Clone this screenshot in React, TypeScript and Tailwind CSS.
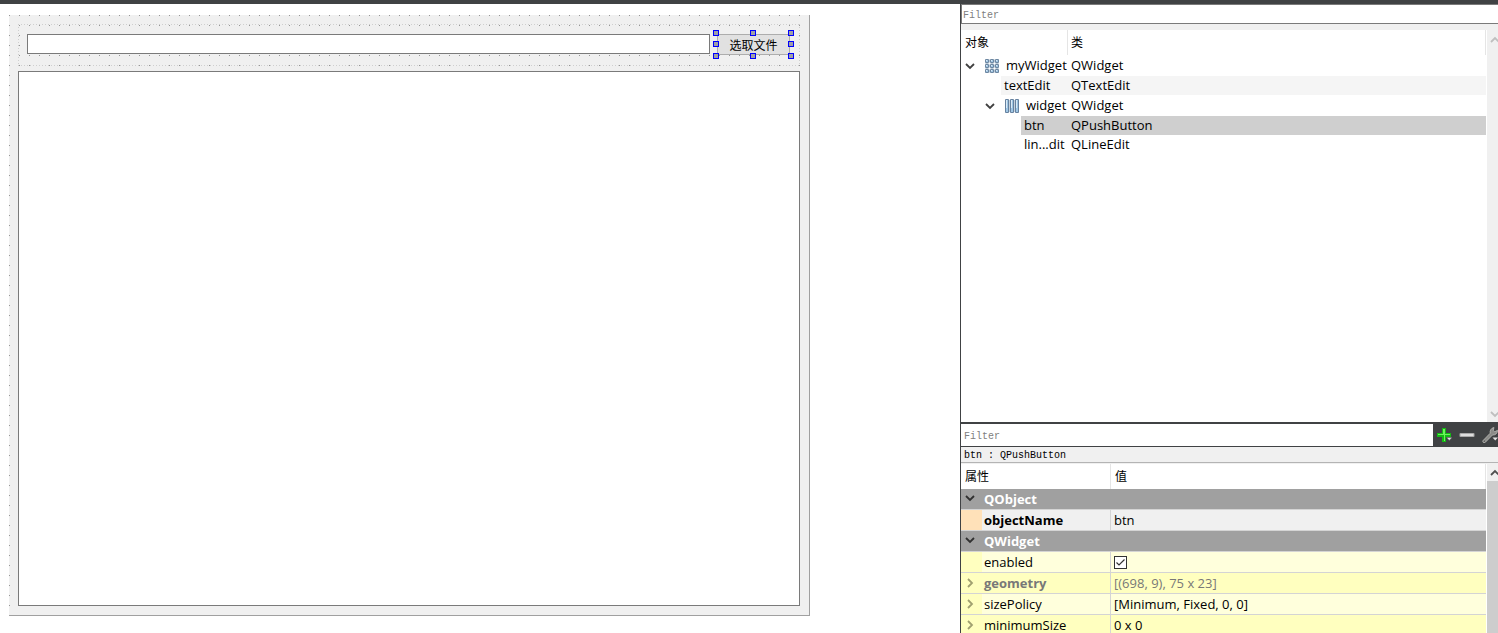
import type { ReactNode } from 'react';
import clsx from 'clsx';

interface TreeItem {
  name: string;
  type: string;
  indent: string;
  icon?: 'grid' | 'columns';
  state?: 'alternate' | 'selected';
}

const treeItems: TreeItem[] = [
  { name: 'myWidget', type: 'QWidget', indent: 'ml-0', icon: 'grid' },
  { name: 'textEdit', type: 'QTextEdit', indent: 'ml-10', state: 'alternate' },
  { name: 'widget', type: 'QWidget', indent: 'ml-5', icon: 'columns' },
  { name: 'btn', type: 'QPushButton', indent: 'ml-15', state: 'selected' },
  { name: 'lin...dit', type: 'QLineEdit', indent: 'ml-15' },
];

interface Property {
  name: string;
  value: ReactNode;
  row: string;
  gutter: string;
  expandable?: boolean;
  nameStyle?: string;
  valueStyle?: string;
}

const widgetProperties: Property[] = [
  { name: 'enabled', value: <EnabledCheckbox />, row: 'bg-[#ffffdc]', gutter: 'bg-[#ffffbf]' },
  {
    name: 'geometry',
    value: '[(698, 9), 75 x 23]',
    row: 'bg-[#ffffbf]',
    gutter: 'bg-[#ffffbf]',
    expandable: true,
    nameStyle: 'font-bold text-[#787878]',
    valueStyle: 'text-[#787878]',
  },
  {
    name: 'sizePolicy',
    value: '[Minimum, Fixed, 0, 0]',
    row: 'bg-[#ffffdc]',
    gutter: 'bg-[#ffffbf]',
    expandable: true,
  },
  { name: 'minimumSize', value: '0 x 0', row: 'bg-[#ffffbf]', gutter: 'bg-[#ffffbf]', expandable: true },
];

// Resize handles around the selected button
const handles = [
  '-left-1 -top-1',
  'left-[33px] -top-1',
  '-right-1 -top-1',
  '-left-1 top-[7px]',
  '-right-1 top-[7px]',
  '-left-1 -bottom-1',
  'left-[33px] -bottom-1',
  '-right-1 -bottom-1',
];

function Chevron({ direction, className }: { direction: 'up' | 'down' | 'right'; className?: string }) {
  const paths = { up: 'M1 7 5 3l4 4', down: 'M1 3l4 4 4-4', right: 'M3 1l4 4-4 4' };
  return (
    <svg viewBox="0 0 10 10" className={clsx('h-[10px] w-[10px] shrink-0', className)} fill="none" aria-hidden="true">
      <path d={paths[direction]} stroke="currentColor" strokeWidth="1.8" />
    </svg>
  );
}

function GridIcon() {
  const cells = [0, 5, 10];
  return (
    <svg viewBox="0 0 14 14" className="h-[14px] w-[14px] shrink-0" aria-hidden="true">
      {cells.map((y) =>
        cells.map((x) => (
          <g key={`${x}-${y}`}>
            <rect x={x} y={y} width="4" height="4" rx="1" fill="#6c87a2" />
            <rect x={x + 1} y={y + 1} width="2" height="2" fill="#a3c6e2" />
            <rect x={x + 1} y={y + 1} width="1" height="1" fill="#dcebf6" />
          </g>
        )),
      )}
      <path d="M4 2h1M9 2h1M4 7h1M9 7h1M4 12h1M9 12h1M2 4v1M2 9v1M7 4v1M7 9v1M12 4v1M12 9v1" stroke="#b9c8d6" strokeWidth="3" />
    </svg>
  );
}

function ColumnsIcon() {
  return (
    <svg viewBox="0 0 14 14" className="h-[14px] w-[14px] shrink-0" aria-hidden="true">
      <rect x="4" y="1" width="6" height="12" fill="#c6d2dd" />
      {[0, 5, 10].map((x) => (
        <g key={x}>
          <rect x={x} y="0" width="4" height="14" rx="1" fill="#6682a0" />
          <rect x={x + 1} y="1" width="2" height="12" fill="#9fc6e4" />
          <rect x={x + 1} y="1" width="1" height="8" fill="#dcebf6" />
        </g>
      ))}
    </svg>
  );
}

function PlusIcon() {
  return (
    <svg viewBox="0 0 16 16" className="h-4 w-4" aria-hidden="true">
      <path d="M6 1h4v5h5v4h-5v5H6v-5H1V6h5z" fill="#14b814" />
      <path d="M7 2h2v5h5v1H9v6H8V8H2V7h5z" fill="#6cf25c" />
      <path d="M10.5 10.5H16l-2.7 3z" fill="#e4e4e4" stroke="#55585a" strokeWidth=".5" />
    </svg>
  );
}

function MinusIcon() {
  return (
    <svg viewBox="0 0 16 16" className="h-4 w-4" aria-hidden="true">
      <rect x=".5" y="6" width="15" height="4" rx="1" fill="#a9a9a9" />
      <rect x="1.5" y="7" width="13" height="2" rx=".5" fill="#dedede" />
    </svg>
  );
}

function WrenchIcon() {
  return (
    <svg viewBox="0 0 16 16" className="h-4 w-4 shrink-0" aria-hidden="true">
      <path
        d="M1 13.6 8.2 6.2C7.6 3.8 9 1 12 .5L11.2 3.4l1.6 1.3 2.7-1.4c.2 3-2.2 5-5 4.7L3.2 15.4c-1.5.9-3-.5-2.2-1.8z"
        fill="#8b8b88"
        stroke="#c6c6c2"
        strokeWidth=".7"
      />
      <circle cx="2.3" cy="14.2" r=".6" fill="#404244" />
      <path d="M10.5 10.5h5.5l-2.7 3z" fill="#e4e4e4" />
    </svg>
  );
}

function EnabledCheckbox() {
  return (
    <span className="relative block h-[13px] w-[13px]">
      <input
        type="checkbox"
        defaultChecked
        aria-label="enabled"
        className="peer block h-[13px] w-[13px] appearance-none border border-[#333333] bg-white"
      />
      <svg
        viewBox="0 0 13 13"
        fill="none"
        aria-hidden="true"
        className="pointer-events-none absolute inset-0 hidden peer-checked:block"
      >
        <path d="M2.5 6.5 5 9l5.5-5.5" stroke="#333333" strokeWidth="1.2" />
      </svg>
    </span>
  );
}

function FormPreview() {
  return (
    <section className="flex flex-1 flex-col border-r border-b border-[#a0a0a0] bg-[#f0f0f0] bg-[conic-gradient(from_270deg_at_1px_1px,#969696_90deg,transparent_0)] bg-[length:10px_10px] p-[9px]">
      {/* Horizontal layout outline */}
      <div className="mb-[5px] flex gap-[7px] bg-[linear-gradient(90deg,#cfcfcf_1px,transparent_1px),linear-gradient(90deg,#cfcfcf_1px,transparent_1px),linear-gradient(#cfcfcf_1px,transparent_1px),linear-gradient(#cfcfcf_1px,transparent_1px)] bg-[length:3px_1px,3px_1px,1px_3px,1px_3px] bg-[position:left_top,left_bottom,left_top,right_top] [background-repeat:repeat-x,repeat-x,repeat-y,repeat-y] pt-[10px] pr-[10px] pb-[11px] pl-[9px]">
        <input
          type="text"
          aria-label="lineEdit"
          className="h-5 min-w-0 flex-1 border border-[#7a7a7a] bg-white px-1 text-xs outline-none"
        />
        <div className="relative h-[21px] w-[73px]">
          <button type="button" className="h-full w-full border border-[#adadad] bg-[#e1e1e1] pt-px text-xs leading-5">
            选取文件
          </button>
          {handles.map((position) => (
            <span key={position} className={clsx('absolute h-[6px] w-[6px] border border-[#0000ff] bg-[#a0a0a4]', position)} />
          ))}
        </div>
      </div>
      <textarea aria-label="textEdit" className="w-full flex-1 resize-none border border-[#7a7a7a] bg-white outline-none" />
    </section>
  );
}

function ObjectInspector() {
  return (
    <section className="flex min-h-0 flex-1 flex-col">
      <input
        type="text"
        placeholder="Filter"
        aria-label="Filter objects"
        className="h-5 border-y border-l border-[#7a7a7a] bg-white px-px pt-[2px] font-['Liberation_Mono',monospace] text-[10px] outline-none placeholder:text-[#808080]"
      />
      <div className="flex min-h-0 flex-1 bg-[#f0f0f0] pt-[6px]">
        <div className="min-w-0 flex-1 border-r border-white bg-white">
          <table className="w-full table-fixed border-separate border-spacing-0">
            <thead>
              <tr className="h-[25px] text-left text-xs">
                <th className="w-[107px] border-r border-[#e5e5e5] p-0 pl-1 font-normal">对象</th>
                <th className="border-r border-[#e5e5e5] p-0 pl-[3px] font-normal">类</th>
              </tr>
            </thead>
            <tbody className="leading-[19px]">
              {treeItems.map((item) => {
                const background = clsx(
                  item.state === 'alternate' && 'bg-[#f5f5f5]',
                  item.state === 'selected' && 'bg-[#cfcfcf]',
                );
                return (
                  <tr key={item.name} className={item.icon ? 'h-[21px]' : 'h-[19px]'}>
                    <td className="p-0">
                      <div className={clsx('flex items-center whitespace-nowrap', item.indent, background)}>
                        {item.icon ? (
                          <>
                            <Chevron direction="down" className="mr-[10px] ml-1 text-[#404040]" />
                            {item.icon === 'grid' ? <GridIcon /> : <ColumnsIcon />}
                            <span className="ml-[7px]">{item.name}</span>
                          </>
                        ) : (
                          <span className="ml-[3px]">{item.name}</span>
                        )}
                      </div>
                    </td>
                    <td className={clsx('py-0 pl-[3px]', background)}>{item.type}</td>
                  </tr>
                );
              })}
            </tbody>
          </table>
        </div>
        <div className="flex w-[11px] flex-col justify-between overflow-hidden pt-[5px] pb-[3px] pl-[3px] text-[#bfbfbf]">
          <Chevron direction="up" />
          <Chevron direction="down" />
        </div>
      </div>
    </section>
  );
}

function GroupRow({ name }: { name: string }) {
  return (
    <tr className="h-[21px] bg-[#a0a0a0] text-white">
      <td className="border-b border-[#d4d4d4] p-0 pb-[2px]">
        <Chevron direction="down" className="ml-1 text-[#303030]" />
      </td>
      <th colSpan={2} className="border-b border-[#d4d4d4] py-0 pl-[2px] text-left font-bold">
        {name}
      </th>
    </tr>
  );
}

function PropertyRow({ property }: { property: Property }) {
  return (
    <tr className={clsx('h-[21px]', property.row)}>
      <td className={clsx('border-b border-[#d4d4d4] p-0', property.gutter)}>
        {property.expandable && <Chevron direction="right" className="ml-1 text-[#a0a070]" />}
      </td>
      <td className={clsx('border-r border-b border-[#d4d4d4] py-0 pl-[2px]', property.nameStyle)}>{property.name}</td>
      <td className={clsx('border-b border-[#d4d4d4] py-0 pl-[3px]', property.valueStyle)}>{property.value}</td>
    </tr>
  );
}

function PropertyEditor() {
  return (
    <section className="flex h-[211px] shrink-0 flex-col">
      <div className="flex h-[25px] shrink-0 bg-[#404244] pt-[2px] pb-px">
        <input
          type="text"
          placeholder="Filter"
          aria-label="Filter properties"
          className="min-w-0 flex-1 bg-white px-[3px] pt-[2px] font-['Liberation_Mono',monospace] text-[10px] outline-none placeholder:text-[#808080]"
        />
        <div className="flex w-[65px] items-center gap-[7px] overflow-hidden pl-[3px]">
          <button type="button" aria-label="Add dynamic property">
            <PlusIcon />
          </button>
          <button type="button" aria-label="Remove dynamic property">
            <MinusIcon />
          </button>
          <button type="button" aria-label="Configure property editor">
            <WrenchIcon />
          </button>
        </div>
      </div>
      <p className="h-4 shrink-0 border-b border-[#b4b4b4] bg-[#f0f0f0] pl-[3px] font-['Liberation_Mono',monospace] text-[10px] leading-[18px]">
        btn : QPushButton
      </p>
      <div className="flex min-h-0 flex-1 bg-[#f0f0f0] pt-px">
        <div className="min-w-0 flex-1 overflow-hidden border-r border-white bg-white">
          <table className="w-full table-fixed border-separate border-spacing-0 leading-5">
            <colgroup>
              <col className="w-[21px]" />
              <col className="w-[129px]" />
              <col />
            </colgroup>
            <thead>
              <tr className="h-[25px] text-left text-xs">
                <th colSpan={2} className="border-r border-[#e5e5e5] p-0 pl-1 font-normal">
                  属性
                </th>
                <th className="border-r border-[#e5e5e5] p-0 pl-1 font-normal">值</th>
              </tr>
            </thead>
            <tbody>
              <GroupRow name="QObject" />
              <PropertyRow
                property={{
                  name: 'objectName',
                  value: 'btn',
                  row: 'bg-[#f0f0f0]',
                  gutter: 'bg-[#ffe1b9]',
                  nameStyle: 'font-bold',
                }}
              />
              <GroupRow name="QWidget" />
              {widgetProperties.map((property) => (
                <PropertyRow key={property.name} property={property} />
              ))}
            </tbody>
          </table>
        </div>
        <div className="flex w-[11px] flex-col overflow-hidden">
          <div className="h-[17px] shrink-0 pt-1 pl-[3px] text-[#505050]">
            <Chevron direction="up" />
          </div>
          <div className="flex-1 bg-[#cdcdcd]" />
        </div>
      </div>
    </section>
  );
}

export default function App() {
  return (
    <div className="flex h-screen flex-col overflow-hidden bg-white font-['Open_Sans','Noto_Sans_CJK_SC',sans-serif] text-[13px] text-black">
      <div className="h-1 shrink-0 bg-[#404244]" />
      <div className="flex min-h-0 flex-1">
        <main className="flex min-w-0 flex-1 pt-[11px] pr-[150px] pb-[17px] pl-[9px]">
          <FormPreview />
        </main>
        <aside className="flex w-[538px] shrink-0 flex-col border-l border-[#404244]">
          <ObjectInspector />
          <PropertyEditor />
        </aside>
      </div>
    </div>
  );
}
